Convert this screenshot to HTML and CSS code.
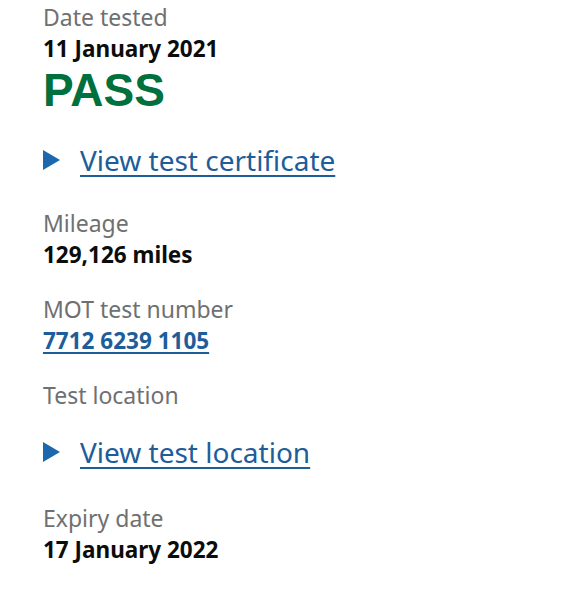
FILE: index.html
```html
<!DOCTYPE html>
<html lang="en">
<head>
  <meta charset="UTF-8">
  <meta name="viewport" content="width=device-width, initial-scale=1.0">
  <title>MOT history</title>
  <link rel="stylesheet" href="styles.css">
</head>
<body>
  <div class="test-result">
    <div class="row row-first">
      <div class="label">Date tested</div>
      <div class="value">11 January 2021</div>
      <div class="result pass">PASS</div>
    </div>

    <details class="details">
      <summary><span class="summary-text">View test certificate</span></summary>
    </details>

    <div class="row">
      <div class="label">Mileage</div>
      <div class="value">129,126 miles</div>
    </div>

    <div class="row">
      <div class="label">MOT test number</div>
      <div class="value"><a href="#" class="value-link">7712 6239 1105</a></div>
    </div>

    <div class="row">
      <div class="label">Test location</div>
    </div>

    <details class="details details-location">
      <summary><span class="summary-text">View test location</span></summary>
    </details>

    <div class="row">
      <div class="label">Expiry date</div>
      <div class="value">17 January 2022</div>
    </div>
  </div>
</body>
</html>
```

FILE: styles.css
```css
body {
  margin: 0;
  background: #ffffff;
  font-family: 'Noto Sans', 'Liberation Sans', Arial, sans-serif;
  color: #0b0c0c;
}

.test-result {
  padding: 2px 0 0 43px;
}

.row {
  margin-bottom: 24px;
}

.row-first {
  margin-bottom: 27px;
}

.label {
  font-size: 23px;
  line-height: 31px;
  color: #6f7071;
}

.value {
  font-size: 22.5px;
  line-height: 31px;
  font-weight: 700;
}

.value-link {
  color: #1d5d9a;
  text-decoration: underline;
  text-underline-offset: 3px;
  text-decoration-thickness: 2px;
}

.result {
  font-family: 'Liberation Sans', Arial, sans-serif;
  font-size: 46px;
  line-height: 52px;
  font-weight: 700;
}

.pass {
  color: #00703c;
}

.details {
  margin-bottom: 31px;
}

.details-location {
  margin-bottom: 34px;
}

.details summary {
  list-style: none;
  display: flex;
  align-items: center;
  cursor: pointer;
  font-size: 28px;
  line-height: 34px;
  color: #1d5d9a;
}

.details summary::-webkit-details-marker {
  display: none;
}

/* blue arrow in front of the summary text */
.details summary::before {
  content: "";
  width: 0;
  height: 0;
  border-top: 10px solid transparent;
  border-bottom: 10px solid transparent;
  border-left: 17px solid #1d67ad;
  margin-right: 20px;
}

.summary-text {
  text-decoration: underline;
  text-underline-offset: 4px;
  text-decoration-thickness: 2px;
}
```
